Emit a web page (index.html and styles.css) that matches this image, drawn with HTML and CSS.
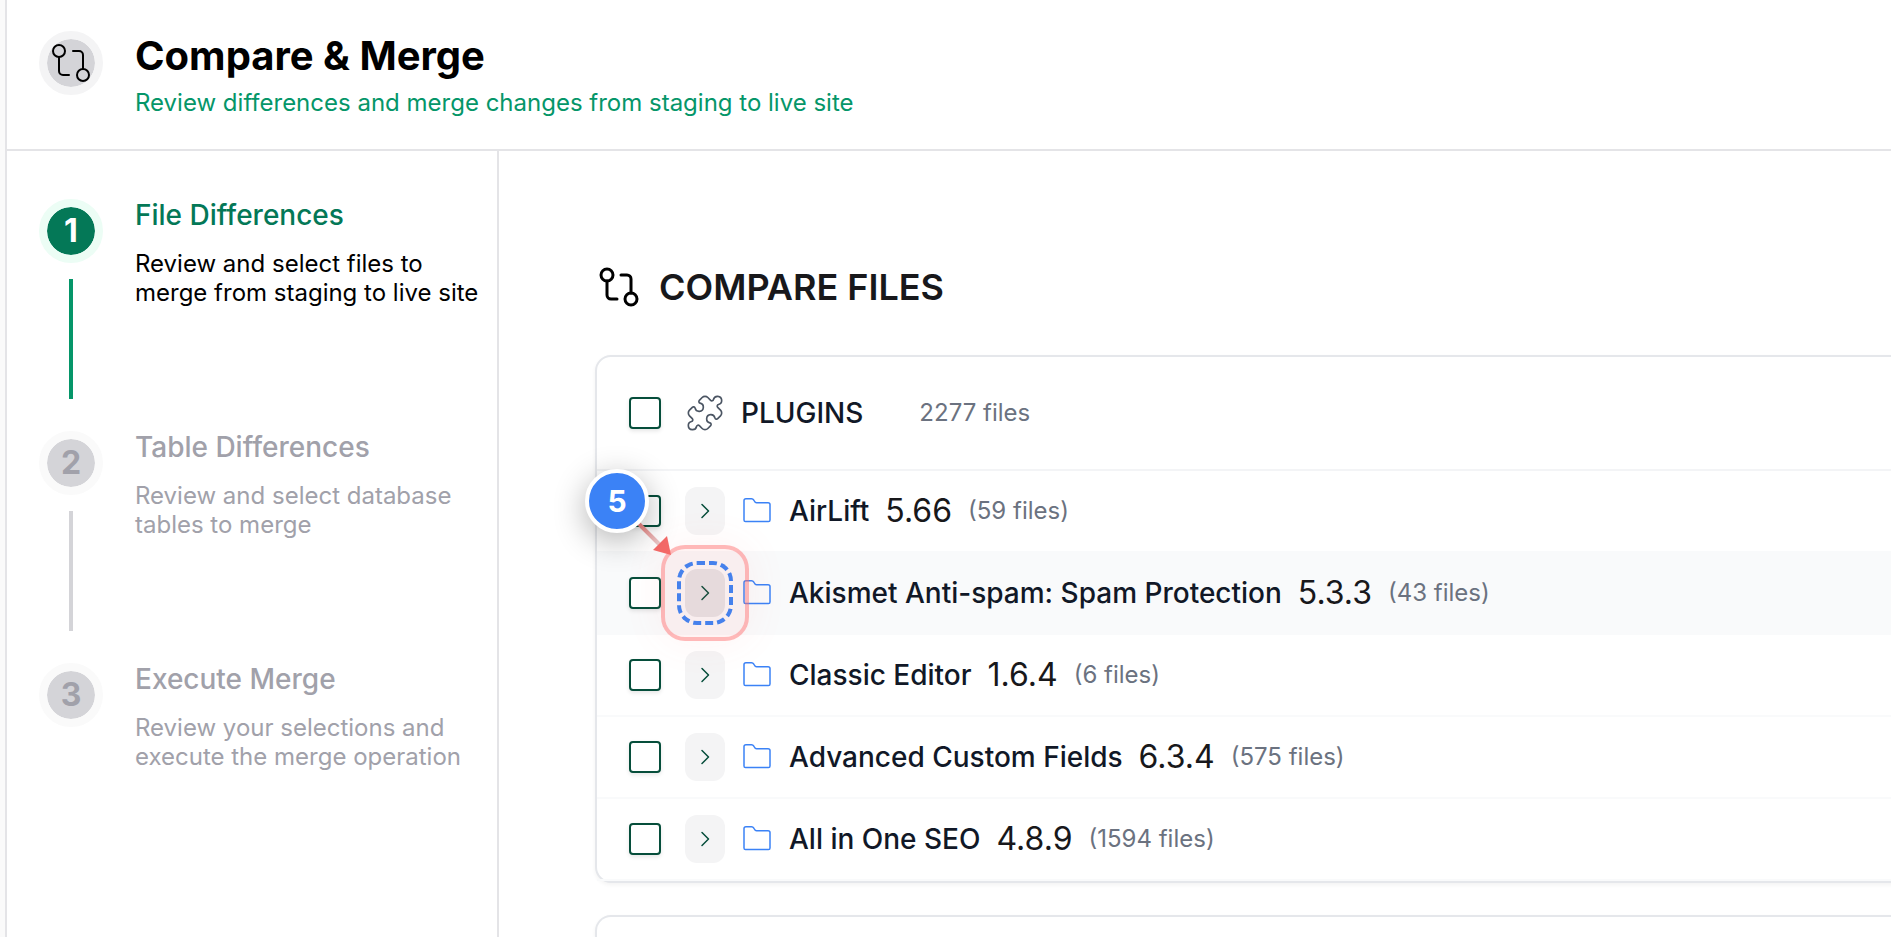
FILE: index.html
```html
<!DOCTYPE html>
<html lang="en">
<head>
<meta charset="utf-8">
<title>Compare &amp; Merge</title>
<link rel="stylesheet" href="styles.css">
</head>
<body>
<svg class="defs" aria-hidden="true">
  <symbol id="compare" viewBox="0 0 24 24"><circle cx="18" cy="18" r="3"/><circle cx="6" cy="6" r="3"/><path d="M13 6h3a2 2 0 0 1 2 2v7"/><path d="M11 18H8a2 2 0 0 1-2-2V9"/></symbol>
  <symbol id="folder" viewBox="0 0 32 32"><path d="M3 25V5.500Q3 3.700 5 3.700H10.500Q12 3.700 12.800 5.200Q14 7.700 15.500 7.700H27Q29 7.700 29 9.500V25Q29 26.600 27.500 26.600H4.500Q3 26.600 3 25Z"/></symbol>
  <symbol id="chevron" viewBox="0 0 16 16"><path d="m5 1.500 6.500 6.500L5 14.500"/></symbol>
  <symbol id="puzzle" viewBox="0 0 24 24"><path d="M15.390 4.390a1 1 0 0 0 1.680-.474 2.500 2.500 0 1 1 3.014 3.015 1 1 0 0 0-.474 1.680l1.683 1.682a2.414 2.414 0 0 1 0 3.414L19.610 15.390a1 1 0 0 1-1.680-.474 2.500 2.500 0 1 0-3.014 3.015 1 1 0 0 1 .474 1.680l-1.683 1.682a2.414 2.414 0 0 1-3.414 0L8.610 19.610a1 1 0 0 0-1.680.474 2.500 2.500 0 1 1-3.014-3.015 1 1 0 0 0 .474-1.680l-1.683-1.682a2.414 2.414 0 0 1 0-3.414L4.390 8.610a1 1 0 0 1 1.680.474 2.500 2.500 0 1 0 3.014-3.015 1 1 0 0 1-.474-1.680l1.683-1.682a2.414 2.414 0 0 1 3.414 0z"/></symbol>
  <linearGradient id="fade" x1="0" y1="0" x2="1" y2="1"><stop offset="0" stop-color="#ee7f7c"/><stop offset="1" stop-color="#e8cccd"/></linearGradient>
</svg>
<div class="app">
  <header class="top">
    <span class="badge badge-icon"><svg class="icon-lg thin"><use href="#compare"/></svg></span>
    <div>
      <h1 class="title">Compare &amp; Merge</h1>
      <p class="subtitle">Review differences and merge changes from staging to live site</p>
    </div>
  </header>
  <div class="body">
    <nav class="steps" aria-label="Steps">
      <div class="step active">
        <div class="rail"><span class="badge">1</span><span class="line"></span></div>
        <div><h2 class="step-title">File Differences</h2><p class="step-text">Review and select files to merge from staging to live site</p></div>
      </div>
      <div class="step">
        <div class="rail"><span class="badge">2</span><span class="line"></span></div>
        <div><h2 class="step-title">Table Differences</h2><p class="step-text">Review and select database tables to merge</p></div>
      </div>
      <div class="step">
        <div class="rail"><span class="badge">3</span></div>
        <div><h2 class="step-title">Execute Merge</h2><p class="step-text">Review your selections and execute the merge operation</p></div>
      </div>
    </nav>
    <main class="main">
      <h2 class="heading"><svg class="icon-lg medium"><use href="#compare"/></svg>COMPARE FILES</h2>
      <section class="card">
        <div class="card-head">
          <input type="checkbox" class="check" id="plugins">
          <svg class="puzzle"><use href="#puzzle"/></svg>
          <label for="plugins" class="name">PLUGINS</label>
          <span class="count total">2277 files</span>
        </div>
        <div class="row">
          <input type="checkbox" class="check" id="p1">
          <button class="expand" aria-label="Expand AirLift"><svg class="chev"><use href="#chevron"/></svg></button>
          <svg class="folder"><use href="#folder"/></svg>
          <label for="p1" class="name">AirLift</label><span class="version">5.66</span><span class="count">(59 files)</span>
        </div>
        <div class="row hover">
          <input type="checkbox" class="check" id="p2">
          <div class="target">
            <button class="expand" aria-label="Expand Akismet"><svg class="chev"><use href="#chevron"/></svg></button>
            <div class="ring"></div>
            <div class="dash"></div>
            <svg class="arrow" viewBox="0 0 40 40"><path class="shaft" d="M5 2 27 24"/><path class="tip" d="M38 34 20 29 34 15Z"/></svg>
            <span class="marker">5</span>
          </div>
          <svg class="folder"><use href="#folder"/></svg>
          <label for="p2" class="name">Akismet Anti-spam: Spam Protection</label><span class="version">5.3.3</span><span class="count">(43 files)</span>
        </div>
        <div class="row">
          <input type="checkbox" class="check" id="p3">
          <button class="expand" aria-label="Expand Classic Editor"><svg class="chev"><use href="#chevron"/></svg></button>
          <svg class="folder"><use href="#folder"/></svg>
          <label for="p3" class="name">Classic Editor</label><span class="version">1.6.4</span><span class="count">(6 files)</span>
        </div>
        <div class="row">
          <input type="checkbox" class="check" id="p4">
          <button class="expand" aria-label="Expand Advanced Custom Fields"><svg class="chev"><use href="#chevron"/></svg></button>
          <svg class="folder"><use href="#folder"/></svg>
          <label for="p4" class="name">Advanced Custom Fields</label><span class="version">6.3.4</span><span class="count">(575 files)</span>
        </div>
        <div class="row">
          <input type="checkbox" class="check" id="p5">
          <button class="expand" aria-label="Expand All in One SEO"><svg class="chev"><use href="#chevron"/></svg></button>
          <svg class="folder"><use href="#folder"/></svg>
          <label for="p5" class="name">All in One SEO</label><span class="version">4.8.9</span><span class="count">(1594 files)</span>
        </div>
      </section>
      <section class="card next"></section>
    </main>
  </div>
</div>
</body>
</html>
```
FILE: styles.css
```css
* { box-sizing: border-box; margin: 0; }
html, body { height: 100%; }
body {
  padding-left: 5px;
  background: #fafafa;
  color: #18181b;
  font-family: Inter, "Liberation Sans", sans-serif;
}
svg { display: block; flex: none; fill: none; stroke: currentColor; stroke-linecap: round; stroke-linejoin: round; }
.defs { position: absolute; width: 0; height: 0; }
.app { display: flex; flex-direction: column; min-height: 100%; border-left: 2px solid #e4e4e7; background: #fff; }

.top { display: flex; gap: 32px; padding: 31px 32px 28px; border-bottom: 2px solid #e4e4e7; }
.title { color: #000; font-size: 40px; font-weight: 700; line-height: 50px; }
.subtitle { margin-top: 4px; color: #059669; font-size: 24px; line-height: 36px; }

.badge {
  display: flex; flex: none; align-items: center; justify-content: center;
  width: 64px; height: 64px;
  border: 8px solid #fafafa; border-radius: 50%;
  background: #d4d4d8; background-clip: padding-box;
  color: #a1a1aa; font-size: 32px; font-weight: 700; line-height: 40px;
}
.badge-icon { border-color: #f4f4f5; color: #000; }
.active .badge { border-color: #ecfdf5; background-color: #047857; color: #fff; }
.icon-lg { width: 48px; height: 48px; }
.thin { stroke-width: 1; }
.medium { stroke-width: 1.5; }

.body { display: flex; flex: 1; }
.steps { flex: none; width: 492px; padding: 48px 8px 0 32px; border-right: 2px solid #e4e4e7; }
.step { display: flex; gap: 32px; height: 232px; color: #a1a1aa; }
.step:last-child { height: auto; }
.rail { display: flex; flex: none; flex-direction: column; align-items: center; gap: 16px; }
.line { width: 4px; height: 120px; background: #d4d4d8; }
.active .line { background: #059669; }
.step-title { font-size: 28px; font-weight: 500; line-height: 32px; }
.active .step-title { color: #047857; }
.step-text { margin-top: 18px; font-size: 24px; line-height: 29px; }
.active .step-text { color: #000; }

.main { display: flex; flex: 1; flex-direction: column; min-width: 0; padding: 112px 0 0 96px; overflow: hidden; }
.heading { display: flex; align-items: center; gap: 16px; font-size: 36px; font-weight: 600; line-height: 48px; }
.heading svg { color: #000; }
.card {
  margin: 44px -32px 0 0;
  border: 2px solid #e5e7eb; border-radius: 16px;
  background: #fff; box-shadow: 0 2px 4px rgba(0, 0, 0, .05);
}
.next { flex: 1; margin-top: 32px; border-bottom: 0; border-radius: 16px 16px 0 0; }
.card-head, .row { display: flex; align-items: center; padding: 0 32px; }
.card-head { height: 114px; border-bottom: 2px solid #f3f4f6; }
.row { height: 82px; border-bottom: 2px solid #f9fafb; }
.hover { background: #f9fafb; }
.check {
  flex: none; appearance: none; width: 32px; height: 32px; margin: 0 24px 0 0;
  border: 2px solid #064e3b; border-radius: 4px;
  background: #fff; box-shadow: 0 2px 4px rgba(0, 0, 0, .1);
}
.puzzle { width: 40px; height: 40px; margin-right: 16px; color: #4b5563; stroke-width: 1; }
.expand {
  display: flex; align-items: center; justify-content: center;
  flex: none; width: 40px; height: 48px; padding: 0;
  border: 0; border-radius: 12px; background: #f4f4f5; color: #064e3b;
}
.hover .expand { background: #e4e4e7; }
.chev { width: 16px; height: 16px; stroke-width: 1.5; }
.folder { width: 32px; height: 32px; margin: 0 16px; color: #3b82f6; stroke-width: 1.5; }
.name { color: #111827; font-size: 28px; font-weight: 500; line-height: 40px; }
.version { margin: 0 16px; font-size: 32px; line-height: 40px; }
.count { color: #6b7280; font-size: 24px; line-height: 32px; }
.total { margin-left: 56px; }

/* Guided-tour highlight around the expand button */
.target { position: relative; z-index: 1; flex: none; }
.ring {
  position: absolute; inset: -24px;
  border: 4px solid rgba(255, 107, 107, .48); border-radius: 24px;
  background: rgba(255, 107, 107, .08); background-clip: padding-box;
  box-shadow: 0 0 40px rgba(255, 107, 107, .08);
}
.dash { position: absolute; inset: -8px; border: 4px dashed #4681ec; border-radius: 20px; }
.arrow { position: absolute; left: -52px; top: -48px; width: 40px; height: 40px; stroke: none; }
.shaft { stroke: url(#fade); stroke-width: 4; }
.tip { fill: #f46a68; }
.marker {
  position: absolute; left: -100px; top: -100px;
  display: flex; align-items: center; justify-content: center;
  width: 64px; height: 64px;
  border: 4px solid #fff; border-radius: 50%; background: #3b82f6;
  box-shadow: 0 8px 32px rgba(0, 0, 0, .3);
  color: #fff; font-size: 30px; font-weight: 700;
}
```
